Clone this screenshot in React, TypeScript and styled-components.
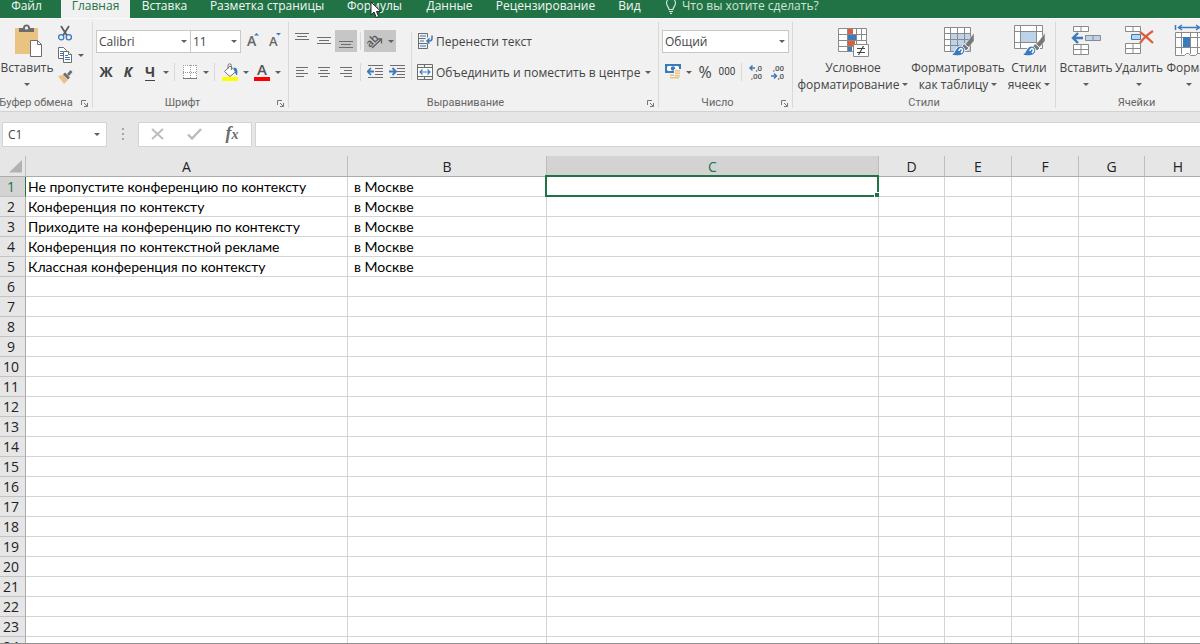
import React, { useState } from 'react';
import styled, { createGlobalStyle } from 'styled-components';

const uiFont = `'Open Sans', 'Noto Sans', sans-serif`;
const labelFont = `Roboto, 'Open Sans', sans-serif`;
const cellFont = `Lato, 'Open Sans', sans-serif`;

const c = {
  green: '#217346',
  ribbon: '#f1f1f1',
  chrome: '#e6e6e6',
  line: '#d4d4d4',
  text: '#444444',
  icon: '#6d6d6d',
  blue: '#3a7abd',
  lightBlue: '#bcd3ea',
  tan: '#eac282',
  red: '#d9603b',
};

const GlobalStyle = createGlobalStyle`
  *, *::before, *::after { box-sizing: border-box; }
  html, body { margin: 0; padding: 0; }
  body { font-family: ${uiFont}; font-size: 12px; color: ${c.text}; overflow: hidden; }
  button, input, select { font: inherit; color: inherit; margin: 0; padding: 0; border: 0; border-radius: 0; background: transparent; outline: none; }
  svg { display: block; flex: none; }
`;

const Window = styled.div`
  position: relative;
  display: flex;
  flex-direction: column;
  height: 100vh;
  overflow: hidden;
  background: #fff;
`;

/* ---------- tab strip ---------- */

const TabBar = styled.header`
  display: flex;
  align-items: flex-end;
  flex: none;
  height: 18px;
  overflow: hidden;
  background: ${c.green};
`;

const Tabs = styled.div`
  display: flex;
  flex: none;
`;

const Tab = styled.button<{ $active?: boolean; $width: number }>`
  width: ${p => p.$width}px;
  height: 24px;
  padding-bottom: 1px;
  line-height: 20px;
  text-align: center;
  white-space: nowrap;
  color: ${p => (p.$active ? c.green : '#f4f8f5')};
  background: ${p => (p.$active ? c.ribbon : 'transparent')};
  &:first-child { margin-right: 8px; }
`;

const TellMe = styled.label`
  display: flex;
  align-items: center;
  gap: 5px;
  height: 24px;
  padding: 0 0 1px 12px;
  color: #d3e5da;
`;

const TellMeInput = styled.input`
  width: 160px;
  height: 20px;
  &::placeholder { color: #d3e5da; opacity: 1; }
`;

const Pointer = styled.svg`
  position: absolute;
  left: 370px;
  top: 1px;
`;

/* ---------- ribbon ---------- */

const Ribbon = styled.div`
  display: flex;
  flex: none;
  height: 94px;
  padding: 3px 0;
  overflow: hidden;
  background: ${c.ribbon};
  border-top: 1px solid #fafafa;
  border-bottom: 1px solid #d2d2d2;
`;

const Group = styled.section<{ $width: number; $bleed?: boolean }>`
  display: flex;
  flex-direction: column;
  flex: none;
  width: ${p => p.$width}px;
  margin-left: ${p => (p.$bleed ? '-4px' : '0')};
  border-right: 1px solid #d9d9d9;
`;

const GroupBody = styled.div<{ $inset?: number }>`
  display: flex;
  flex: 1;
  padding-left: ${p => p.$inset ?? 2}px;
`;

const GroupFooter = styled.div`
  display: flex;
  align-items: center;
  height: 10px;
  line-height: 10px;
  font-family: ${labelFont};
  font-size: 11px;
  color: #666;
`;

const GroupName = styled.span`
  flex: 1;
  text-align: center;
  white-space: nowrap;
`;

const Launcher = styled.button`
  display: flex;
  justify-content: center;
  width: 16px;
`;

const Rows = styled.div`
  display: flex;
  flex-direction: column;
  gap: 9px;
  padding-top: 8px;
`;

const Row = styled.div<{ $inset?: number }>`
  display: flex;
  align-items: center;
  height: 22px;
  padding-left: ${p => p.$inset ?? 0}px;
`;

const IconButton = styled.button<{ $pressed?: boolean }>`
  display: flex;
  align-items: center;
  justify-content: center;
  width: 22px;
  height: 22px;
  background: ${p => (p.$pressed ? '#c6c6c6' : 'transparent')};
`;

const ArrowButton = styled(IconButton)`
  width: 10px;
`;

const SplitSmall = styled.div`
  display: flex;
`;

const Glyph = styled.span<{ $italic?: boolean; $underline?: boolean }>`
  font-size: 14px;
  font-weight: 700;
  line-height: 16px;
  font-style: ${p => (p.$italic ? 'italic' : 'normal')};
  border-bottom: ${p => (p.$underline ? `1px solid ${c.text}` : '0')};
`;

const RowDivider = styled.span<{ $tall?: boolean; $wide?: boolean }>`
  flex: none;
  width: 1px;
  height: ${p => (p.$tall ? '48px' : '18px')};
  margin: ${p => (p.$tall ? '10px 3px 0' : p.$wide ? '0 4px 0 3px' : '0 3px')};
  background: #d9d9d9;
`;

const WideButton = styled.button`
  display: flex;
  align-items: center;
  gap: 3px;
  height: 22px;
  padding-left: 2px;
  white-space: nowrap;
`;

const WideLabel = styled.span`
  margin-right: 2px;
`;

const LargeButton = styled.button<{ $width: number }>`
  display: flex;
  flex-direction: column;
  align-items: center;
  flex: none;
  width: ${p => p.$width}px;
  padding-top: 2px;
`;

const LargeIcon = styled.span`
  display: flex;
  align-items: flex-start;
  height: 35px;
`;

const LargeLine = styled.span`
  display: flex;
  align-items: center;
  gap: 3px;
  height: 17px;
  line-height: 17px;
  white-space: nowrap;
`;

const SmallColumn = styled.div`
  display: flex;
  flex-direction: column;
`;

const Combo = styled.span<{ $width: number }>`
  display: grid;
  align-items: center;
  width: ${p => p.$width}px;
  height: 23px;
  background: #fff;
  border: 1px solid #c8c8c8;
  & + & { border-left: 0; }
  & > * { grid-area: 1 / 1; }
  & > svg { justify-self: end; margin-right: 3px; pointer-events: none; }
`;

const Select = styled.select`
  appearance: none;
  width: 100%;
  height: 21px;
  padding-left: 2px;
`;

/* ---------- formula bar ---------- */

const FormulaBar = styled.div`
  display: flex;
  align-items: flex-start;
  flex: none;
  height: 44px;
  padding: 10px 0 0 2px;
  background: ${c.chrome};
`;

const NameBox = styled.span`
  display: grid;
  align-items: center;
  width: 105px;
  height: 25px;
  background: #fff;
  border: 1px solid ${c.line};
  & > * { grid-area: 1 / 1; }
  & > svg { justify-self: end; margin-right: 6px; }
`;

const NameInput = styled.input`
  width: 100%;
  padding-left: 5px;
  line-height: 20px;
`;

const Grip = styled.span`
  display: flex;
  align-items: center;
  justify-content: center;
  width: 31px;
  height: 23px;
`;

const FormulaTools = styled.div`
  display: flex;
  align-items: center;
  justify-content: space-between;
  width: 114px;
  height: 25px;
  padding: 0 8px 2px 7px;
  background: #fff;
  border: 1px solid ${c.line};
`;

const FormulaInput = styled.input`
  && {
    flex: 1;
    height: 25px;
    margin-left: 3px;
    padding: 0 4px;
    background: #fff;
    border: 1px solid ${c.line};
    border-right: 0;
  }
`;

/* ---------- worksheet ---------- */

const Sheet = styled.main`
  flex: 1;
  min-height: 0;
  overflow: hidden;
  border-bottom: 1px solid #8f8f8f;
`;

const Grid = styled.table`
  table-layout: fixed;
  width: 1212px;
  border-collapse: separate;
  border-spacing: 0;
  font-family: ${cellFont};
  font-size: 14px;
  color: #000;
`;

const ColHead = styled.th<{ $active?: boolean }>`
  height: 21px;
  padding: 0;
  font-family: ${uiFont};
  font-size: 14px;
  font-weight: 400;
  line-height: 19px;
  color: ${p => (p.$active ? c.green : '#222')};
  background: ${p => (p.$active ? '#d3d3d3' : c.chrome)};
  border-right: 1px solid #bdbdbd;
  border-bottom: 1px solid #ababab;
`;

const Corner = styled(ColHead)`
  & > svg { margin: 1px 0 0 9px; }
`;

const RowHead = styled.th<{ $active?: boolean }>`
  height: 20px;
  padding: 0 3px 0 0;
  font-family: ${uiFont};
  font-size: 14px;
  font-weight: 400;
  line-height: 19px;
  color: ${p => (p.$active ? c.green : '#222')};
  background: ${p => (p.$active ? '#d3d3d3' : c.chrome)};
  border-right: 1px solid ${p => (p.$active ? c.green : '#ababab')};
  border-bottom: 1px solid #c3c3c3;
`;

const Cell = styled.td<{ $indent?: boolean; $active?: boolean }>`
  position: relative;
  height: 20px;
  padding: 1px 0 0 ${p => (p.$indent ? 6 : 2)}px;
  line-height: 18px;
  white-space: nowrap;
  background: #fff;
  border-right: 1px solid ${c.line};
  border-bottom: 1px solid ${c.line};
`;

const Selection = styled.span`
  position: absolute;
  inset: -2px -1px -1px -2px;
  border: 2px solid ${c.green};
  &::after {
    content: '';
    position: absolute;
    right: -3px;
    bottom: -3px;
    width: 6px;
    height: 6px;
    background: ${c.green};
    border: 1px solid #fff;
    border-right: 0;
    border-bottom: 0;
  }
`;

/* ---------- icons ---------- */

const Caret = () => (
  <svg width="6" height="3" viewBox="0 0 6 3"><path d="M0 0h6L3 3z" fill="#5e5e5e" /></svg>
);

const LauncherIcon = () => (
  <svg width="7" height="7" viewBox="0 0 7 7" fill="none" stroke="#777">
    <path d="M.5 5V.5H5M3 3l3 3M6.500 3v3.500H3" />
  </svg>
);

const Lines = ({ rows, align = 'center' }: { rows: [number, number][]; align?: 'left' | 'center' | 'right' }) => (
  <svg width="16" height="16" viewBox="0 0 16 16" shapeRendering="crispEdges">
    {rows.map(([y, w]) => {
      const x = align === 'left' ? 2 : align === 'right' ? 14 - w : (16 - w) / 2;
      return <rect key={y} x={x} y={y} width={w} height="1" fill={c.icon} />;
    })}
  </svg>
);

const BulbIcon = () => (
  <svg width="12" height="16" viewBox="0 0 12 16" fill="none" stroke="#d3e5da" strokeWidth="1.200">
    <path d="M4 11.500C4 9 1.500 8 1.500 5a4.500 4.500 0 0 1 9 0c0 3-2.500 4-2.500 6.500zM4 13.500h4M5 15.300h2" />
  </svg>
);

const PasteIcon = () => (
  <svg width="30" height="34" viewBox="0 0 30 34">
    <rect x="3" y="4" width="23" height="26" fill={c.tan} />
    <path d="M7 8V4h4a3.500 3.500 0 0 1 7 0h4v4z" fill={c.icon} />
    <rect x="13" y="2.500" width="3" height="3" rx="1" fill={c.ribbon} />
    <path d="M18.500 16.500h7l4 4v12h-11z" fill="#fff" stroke={c.icon} />
    <path d="M25.500 16.500v4h4" fill="none" stroke={c.icon} />
  </svg>
);

const CutIcon = () => (
  <svg width="16" height="16" viewBox="0 0 16 16" fill="none">
    <path d="M4 1l6 9.500M12 1L6 10.500" stroke="#5e5e5e" strokeWidth="1.800" />
    <circle cx="4.200" cy="12.200" r="2.600" stroke={c.blue} strokeWidth="1.300" />
    <circle cx="11.800" cy="12.200" r="2.600" stroke={c.blue} strokeWidth="1.300" />
  </svg>
);

const CopyIcon = () => (
  <svg width="16" height="16" viewBox="0 0 16 16" fill="#fff" stroke={c.icon}>
    <path d="M1.500.5h5l3 3v8h-8z" />
    <path d="M3 4.500h3M3 6.500h3M3 8.500h3" stroke={c.blue} />
    <path d="M6.500 4.500h5l3 3v8h-8z" />
    <path d="M11.500 4.500v3h3" />
    <path d="M8 8.500h3M8 10.500h5M8 12.500h5" stroke={c.blue} />
  </svg>
);

const BrushIcon = () => (
  <svg width="16" height="16" viewBox="0 0 16 16">
    <path d="M1 7l5-1 5 5-4 4z" fill={c.tan} />
    <path d="M6 5.500l2-2 5 5-2 2z" fill={c.icon} />
    <path d="M10 5l3.500-4 2 2L12 7z" fill={c.icon} />
  </svg>
);

const FontSizeIcon = ({ grow }: { grow?: boolean }) => (
  <svg width="16" height="18" viewBox="0 0 16 18">
    <text x="3" y="14" fontFamily="Open Sans" fontSize={grow ? 14 : 13} fontWeight="600" fill="#666">A</text>
    <path d={grow ? 'M10 3.500h5L12.500 1z' : 'M10 1h5L12.500 3.500z'} fill={c.blue} />
  </svg>
);

const BordersIcon = () => (
  <svg width="16" height="16" viewBox="0 0 16 16" fill="none" stroke="#999" shapeRendering="crispEdges">
    <rect x="1" y="1" width="14" height="13" fill="#fff" stroke="none" />
    <path d="M1.500 1v13M14.500 1v13M8 1v13M1 1.500h14M1 8h14" strokeDasharray="1 1" />
    <path d="M1 14.500h14" stroke="#777" />
  </svg>
);

const FillIcon = () => (
  <svg width="18" height="18" viewBox="0 0 18 18">
    <path d="M9 3l6 5.500-6 5-5.500-5z" fill="#fff" stroke="#777" />
    <path d="M7 6V2.500a1.700 1.700 0 0 1 3.400 0V7" fill="none" stroke="#777" />
    <path d="M12.500 4.500c4 0 4.500 3.500 3.500 8-1.500-1-2-3-3.500-8z" fill={c.blue} />
    <rect x="1" y="14" width="16" height="4" fill="#ff0" />
  </svg>
);

const FontColorIcon = () => (
  <svg width="18" height="18" viewBox="0 0 18 18">
    <text x="9" y="12" textAnchor="middle" fontFamily="Open Sans" fontSize="15" fontWeight="600" fill="#555">A</text>
    <rect x="1" y="14" width="16" height="4" fill="#f00" />
  </svg>
);

const OrientationIcon = () => (
  <svg width="18" height="16" viewBox="0 0 18 16">
    <text x="1" y="12" transform="rotate(-45 6 10)" fontFamily="Open Sans" fontSize="11" fontWeight="600" fill="#555">ab</text>
    <path d="M6 15l9-8.500M11 6h4.500v4.500" fill="none" stroke="#5e5e5e" strokeWidth="1.300" />
  </svg>
);

const IndentIcon = ({ right }: { right?: boolean }) => (
  <svg width="16" height="16" viewBox="0 0 16 16" fill="none">
    <path d="M1 1.500h15M8 4.500h8M8 7.500h8M8 10.500h8M1 13.500h15" stroke={c.icon} />
    <path d={right ? 'M0 7.500h6M3.500 4l3.500 3.500L3.500 11' : 'M7 7.500H1M4 4L.7 7.500 4 11'} stroke={c.blue} strokeWidth="1.800" />
  </svg>
);

const WrapIcon = () => (
  <svg width="16" height="16" viewBox="0 0 16 16" fill="none">
    <path d="M1.500 0v16M1.500.5h9v4M1.500 5.500h7M1.500 10.500h9v5h-9" stroke={c.icon} />
    <path d="M3 3h6M3 8h4M3 13h6" stroke={c.blue} />
    <path d="M15 2.500V5.500Q15 8 12 8H9.500M12.500 5.500L10 8l2.500 2.500" stroke={c.blue} strokeWidth="1.500" />
  </svg>
);

const MergeIcon = () => (
  <svg width="16" height="16" viewBox="0 0 16 16" fill="none">
    <path d="M1 4h14v8H1z" fill="#fff" />
    <path d="M.5.5h15v15H.5zM.5 3.500h15M.5 12.500h15M7.500 0v4M7.500 12v4" stroke={c.icon} />
    <path d="M3 8h10M5.500 5.500L3 8l2.500 2.500M10.500 5.500L13 8l-2.500 2.500" stroke={c.blue} strokeWidth="1.200" />
  </svg>
);

const MoneyIcon = () => (
  <svg width="16" height="16" viewBox="0 0 16 16">
    <path d="M0 0h16v9H0z" fill={c.blue} />
    <path d="M3 2h10l1 1v3l-1 1H3L2 6V3z" fill="#fff" />
    <circle cx="8" cy="4.500" r="2.200" fill={c.blue} />
    <path d="M9 5h7v11H5v-6h4z" fill={c.ribbon} />
    <path d="M10 6h5v1.500h-5zM10 8.500h5V10h-5zM10 11h5v1.500h-5zM5 10.500h4V12H5zM5 13h9v1.500H5z" fill={c.tan} />
  </svg>
);

const DecimalIcon = ({ less }: { less?: boolean }) => (
  <svg width="14" height="16" viewBox="0 0 14 16" fontFamily="Roboto" fontSize="8" fontWeight="500" textAnchor="end" fill="#555">
    {less ? (
      <>
        <text x="13" y="7">,00</text>
        <text x="13" y="15">,0</text>
        <path d="M0 12h5M3 9.500L5.500 12 3 14.500" fill="none" stroke={c.blue} strokeWidth="1.500" />
      </>
    ) : (
      <>
        <text x="13" y="7">,0</text>
        <text x="13" y="15">,00</text>
        <path d="M6 4H1M3.500 1.500L1 4l2.500 2.500" fill="none" stroke={c.blue} strokeWidth="1.500" />
      </>
    )}
  </svg>
);

const ConditionalIcon = () => (
  <svg width="32" height="34" viewBox="0 0 32 34">
    <path d="M1.500 4.500h28v23h-28z" fill="#fff" />
    <path d="M11 5h5v5h-5zM11 16h7v6h-7z" fill={c.red} />
    <path d="M11 10h8v6h-8zM11 22h4v5h-4z" fill={c.blue} />
    <path d="M1.500 4.500h28v23h-28zM1.500 10.500h28M1.500 16.500h28M1.500 22.500h28M10.500 4v24M19.500 4v24M24.500 4v12" fill="none" stroke="#8a8a8a" />
    <path d="M16.500 20.500h15v12h-15z" fill="#fff" stroke="#8a8a8a" />
    <path d="M20 24.500h8M20 28.500h8M26.500 22l-5 9" stroke="#444" strokeWidth="1.200" />
  </svg>
);

const StyleBrush = () => (
  <>
    <path d="M32 9v8l-7 8-3-3z" fill="#777" stroke={c.ribbon} strokeWidth=".5" />
    <path d="M22 19.500l5 4.500-3 3-5-4z" fill="#777" stroke="#fff" />
    <path d="M9 31c4-1 4-8 9-9 4 0 6 4 4 7-3 4-9 3-13 2z" fill={c.blue} stroke="#fff" />
    <path d="M17 27c0-2 2-3 3-2s0 3-1 4" fill="none" stroke="#fff" strokeWidth="1.500" />
  </>
);

const FormatTableIcon = () => (
  <svg width="32" height="34" viewBox="0 0 32 34">
    <path d="M2.500 3.500h26v24h-26z" fill="#fff" />
    <path d="M9 9h19v18H9z" fill={c.lightBlue} />
    <path d="M2.500 3.500h26v24h-26zM2.500 9.500h26M2.500 15.500h26M2.500 21.500h26M8.500 3v24M15.500 3v24M22.500 3v24" fill="none" stroke="#8a8a8a" />
    <StyleBrush />
  </svg>
);

const CellStylesIcon = () => (
  <svg width="32" height="34" viewBox="0 0 32 34">
    <path d="M1.500 1.500h28v23h-28z" fill="#fff" />
    <path d="M8 8h15v10H8z" fill={c.lightBlue} />
    <path d="M1.500 1.500h28v23h-28zM1.500 7.500h28M1.500 18.500h28M7.500 1v24M23.500 1v24" fill="none" stroke="#8a8a8a" />
    <StyleBrush />
  </svg>
);

const InsertCellsIcon = () => (
  <svg width="30" height="34" viewBox="0 0 30 34" stroke="#8a8a8a">
    <path d="M2.500 2.500h15v5h-15zM10 2.500v5M2.500 20.500h15v10h-15zM10 20.500v10M2.500 25.500h15" fill="#fff" />
    <path d="M14.500 11.500h15v5h-15zM22 11.500v5" fill={c.lightBlue} />
    <path d="M12 14H2M7 9l-5 5 5 5" fill="none" stroke={c.blue} strokeWidth="2.400" />
  </svg>
);

const DeleteCellsIcon = () => (
  <svg width="30" height="34" viewBox="0 0 30 34" stroke="#8a8a8a">
    <path d="M1.500 2.500h15v5h-15zM9 2.500v5M1.500 19.500h15v10h-15zM9 19.500v10M1.500 24.500h15" fill="#fff" />
    <path d="M7.500 10.500h9v5h-9z" fill={c.lightBlue} stroke={c.blue} />
    <path d="M16 8c4 3 9 7 13 11M29 7c-5 3-10 8-13 12" fill="none" stroke={c.red} strokeWidth="2.200" />
  </svg>
);

const FormatCellsIcon = () => (
  <svg width="30" height="34" viewBox="0 0 30 34">
    <path d="M1.500 1v5M28.500 1v5M4 3.500h22M8 1L4.500 3.500 8 6M22 1l3.500 2.500L22 6" fill="none" stroke={c.blue} strokeWidth="1.500" />
    <path d="M1.500 8.500h28v21h-6l-2 2h-5l-2-2h-2l-2 2h-9z" fill="#fff" stroke="#8a8a8a" />
    <path d="M1.500 13.500h28M1.500 23.500h28M7.500 8v22M16.500 8v22M23.500 8v22" stroke="#8a8a8a" fill="none" />
    <path d="M9 13h7v10H9z" fill={c.blue} />
  </svg>
);

const GripIcon = () => (
  <svg width="2" height="12" viewBox="0 0 2 12" fill="#a5a5a5"><path d="M0 0h2v2H0zM0 5h2v2H0zM0 10h2v2H0z" /></svg>
);

const CancelIcon = () => (
  <svg width="13" height="12" viewBox="0 0 13 12"><path d="M1 1l11 10M12 1L1 11" stroke="#bbb" strokeWidth="1.800" /></svg>
);

const EnterIcon = () => (
  <svg width="15" height="12" viewBox="0 0 15 12"><path d="M1 6.500L5 10.500 14 1" fill="none" stroke="#bbb" strokeWidth="2.400" /></svg>
);

const FxGlyph = styled.span`
  font-family: 'Liberation Serif', serif;
  font-size: 18px;
  font-style: italic;
  font-weight: 700;
  line-height: 20px;
  color: #6d6d6d;
  & > small { font-size: 14px; }
`;

const PercentGlyph = styled.span`
  font-size: 16px;
  line-height: 20px;
`;

const ThousandsGlyph = styled.span`
  font-family: ${labelFont};
  font-size: 10px;
  line-height: 20px;
`;

/* ---------- parts ---------- */

const tabs: [string, number][] = [
  ['Файл', 53],
  ['Главная', 69],
  ['Вставка', 69],
  ['Разметка страницы', 136],
  ['Формулы', 79],
  ['Данные', 71],
  ['Рецензирование', 121],
  ['Вид', 47],
];

function RibbonGroup({ name, width, inset, bleed, launcher = true, children }: {
  name: string; width: number; inset?: number; bleed?: boolean; launcher?: boolean; children: React.ReactNode;
}) {
  return (
    <Group $width={width} $bleed={bleed} aria-label={name}>
      <GroupBody $inset={inset}>{children}</GroupBody>
      <GroupFooter>
        <GroupName>{name}</GroupName>
        {launcher && <Launcher aria-label={`${name}: параметры`}><LauncherIcon /></Launcher>}
      </GroupFooter>
    </Group>
  );
}

function Large({ icon, lines, width }: { icon: React.ReactNode; lines: string[]; width: number }) {
  return (
    <LargeButton $width={width}>
      <LargeIcon>{icon}</LargeIcon>
      <LargeLine>{lines[0]}</LargeLine>
      <LargeLine>{lines[1]}<Caret /></LargeLine>
    </LargeButton>
  );
}

function Split({ label, children }: { label: string; children: React.ReactNode }) {
  return (
    <SplitSmall>
      <IconButton aria-label={label}>{children}</IconButton>
      <ArrowButton aria-label={`${label}: меню`}><Caret /></ArrowButton>
    </SplitSmall>
  );
}

function ComboBox({ label, value, width }: { label: string; value: string; width: number }) {
  return (
    <Combo $width={width}>
      <Select aria-label={label} defaultValue={value}><option>{value}</option></Select>
      <Caret />
    </Combo>
  );
}

const columns: [string, number][] = [
  ['A', 322], ['B', 199], ['C', 332], ['D', 66], ['E', 67], ['F', 67], ['G', 66], ['H', 67],
];

const phrases = [
  'Не пропустите конференцию по контексту',
  'Конференция по контексту',
  'Приходите на конференцию по контексту',
  'Конференция по контекстной рекламе',
  'Классная конференция по контексту',
];

export default function App() {
  const [activeTab, setActiveTab] = useState('Главная');

  return (
    <Window>
      <GlobalStyle />
      <TabBar>
        <Tabs role="tablist">
          {tabs.map(([name, width]) => (
            <Tab key={name} role="tab" aria-selected={name === activeTab} $active={name === activeTab} $width={width} onClick={() => setActiveTab(name)}>
              {name}
            </Tab>
          ))}
        </Tabs>
        <TellMe>
          <BulbIcon />
          <TellMeInput aria-label="Помощник" placeholder="Что вы хотите сделать?" />
        </TellMe>
      </TabBar>

      <Ribbon>
        <RibbonGroup name="Буфер обмена" width={97} inset={4} bleed>
          <Large icon={<PasteIcon />} lines={['Вставить', '']} width={54} />
          <SmallColumn>
            <IconButton aria-label="Вырезать"><CutIcon /></IconButton>
            <Split label="Копировать"><CopyIcon /></Split>
            <IconButton aria-label="Формат по образцу"><BrushIcon /></IconButton>
          </SmallColumn>
        </RibbonGroup>

        <RibbonGroup name="Шрифт" width={196}>
          <Rows>
            <Row $inset={1}>
              <ComboBox label="Шрифт" value="Calibri" width={95} />
              <ComboBox label="Размер шрифта" value="11" width={50} />
              <IconButton aria-label="Увеличить размер шрифта"><FontSizeIcon grow /></IconButton>
              <IconButton aria-label="Уменьшить размер шрифта"><FontSizeIcon /></IconButton>
            </Row>
            <Row>
              <IconButton><Glyph>Ж</Glyph></IconButton>
              <IconButton><Glyph $italic>К</Glyph></IconButton>
              <Split label="Подчеркнутый"><Glyph $underline>Ч</Glyph></Split>
              <RowDivider $wide />
              <Split label="Границы"><BordersIcon /></Split>
              <RowDivider $wide />
              <Split label="Цвет заливки"><FillIcon /></Split>
              <Split label="Цвет текста"><FontColorIcon /></Split>
            </Row>
          </Rows>
        </RibbonGroup>

        <RibbonGroup name="Выравнивание" width={370}>
          <Rows>
            <Row>
              <IconButton aria-label="По верхнему краю"><Lines rows={[[0, 14], [3, 10], [6, 14]]} /></IconButton>
              <IconButton aria-label="По середине"><Lines rows={[[4, 14], [7, 10], [10, 14]]} /></IconButton>
              <IconButton aria-label="По нижнему краю" $pressed><Lines rows={[[8, 14], [11, 10], [14, 14]]} /></IconButton>
              <RowDivider />
              <IconButton aria-label="Наклон текста" $pressed><OrientationIcon /></IconButton>
              <ArrowButton aria-label="Ориентация" $pressed><Caret /></ArrowButton>
            </Row>
            <Row>
              <IconButton aria-label="По левому краю"><Lines align="left" rows={[[3, 12], [6, 8], [9, 12], [12, 8]]} /></IconButton>
              <IconButton aria-label="По центру"><Lines rows={[[3, 12], [6, 8], [9, 12], [12, 8]]} /></IconButton>
              <IconButton aria-label="По правому краю"><Lines align="right" rows={[[3, 12], [6, 8], [9, 12], [12, 8]]} /></IconButton>
              <RowDivider />
              <IconButton aria-label="Уменьшить отступ"><IndentIcon /></IconButton>
              <IconButton aria-label="Увеличить отступ"><IndentIcon right /></IconButton>
            </Row>
          </Rows>
          <RowDivider $tall />
          <Rows>
            <WideButton><WrapIcon /><WideLabel>Перенести текст</WideLabel></WideButton>
            <WideButton><MergeIcon /><WideLabel>Объединить и поместить в центре</WideLabel><Caret /></WideButton>
          </Rows>
        </RibbonGroup>

        <RibbonGroup name="Число" width={134} inset={3}>
          <Rows>
            <Row>
              <ComboBox label="Числовой формат" value="Общий" width={127} />
            </Row>
            <Row>
              <Split label="Финансовый формат"><MoneyIcon /></Split>
              <IconButton><PercentGlyph>%</PercentGlyph></IconButton>
              <IconButton><ThousandsGlyph>000</ThousandsGlyph></IconButton>
              <RowDivider />
              <IconButton aria-label="Увеличить разрядность"><DecimalIcon /></IconButton>
              <IconButton aria-label="Уменьшить разрядность"><DecimalIcon less /></IconButton>
            </Row>
          </Rows>
        </RibbonGroup>

        <RibbonGroup name="Стили" width={263} launcher={false}>
          <Large icon={<ConditionalIcon />} lines={['Условное', 'форматирование']} width={116} />
          <Large icon={<FormatTableIcon />} lines={['Форматировать', 'как таблицу']} width={94} />
          <Large icon={<CellStylesIcon />} lines={['Стили', 'ячеек']} width={48} />
        </RibbonGroup>

        <RibbonGroup name="Ячейки" width={162} inset={3} launcher={false}>
          <Large icon={<InsertCellsIcon />} lines={['Вставить', '']} width={54} />
          <Large icon={<DeleteCellsIcon />} lines={['Удалить', '']} width={52} />
          <Large icon={<FormatCellsIcon />} lines={['Формат', '']} width={48} />
        </RibbonGroup>
      </Ribbon>

      <FormulaBar>
        <NameBox>
          <NameInput aria-label="Имя ячейки" defaultValue="C1" />
          <Caret />
        </NameBox>
        <Grip><GripIcon /></Grip>
        <FormulaTools>
          <IconButton aria-label="Отмена"><CancelIcon /></IconButton>
          <IconButton aria-label="Ввод"><EnterIcon /></IconButton>
          <IconButton aria-label="Вставить функцию"><FxGlyph>f<small>x</small></FxGlyph></IconButton>
        </FormulaTools>
        <FormulaInput aria-label="Строка формул" />
      </FormulaBar>

      <Sheet>
        <Grid>
          <colgroup>
            <col style={{ width: 26 }} />
            {columns.map(([name, width]) => <col key={name} style={{ width }} />)}
          </colgroup>
          <thead>
            <tr>
              <Corner aria-label="Выделить все">
                <svg width="14" height="13" viewBox="0 0 14 13"><path d="M13 0v12.500H0z" fill="#b2b2b2" /></svg>
              </Corner>
              {columns.map(([name]) => <ColHead key={name} scope="col" $active={name === 'C'}>{name}</ColHead>)}
            </tr>
          </thead>
          <tbody>
            {Array.from({ length: 24 }, (_, i) => (
              <tr key={i}>
                <RowHead scope="row" $active={i === 0}>{i + 1}</RowHead>
                {columns.map(([name]) => (
                  <Cell key={name} $indent={name === 'B'}>
                    {name === 'A' && phrases[i]}
                    {name === 'B' && i < phrases.length && 'в Москве'}
                    {name === 'C' && i === 0 && <Selection />}
                  </Cell>
                ))}
              </tr>
            ))}
          </tbody>
        </Grid>
      </Sheet>

      <Pointer width="12" height="18" viewBox="0 0 12 18" aria-hidden="true">
        <path d="M1 1v13l3-3 2.300 5.500 2.400-1L6.500 10.500h4.300z" fill="#fff" stroke="#222" strokeWidth="1" />
      </Pointer>
    </Window>
  );
}
